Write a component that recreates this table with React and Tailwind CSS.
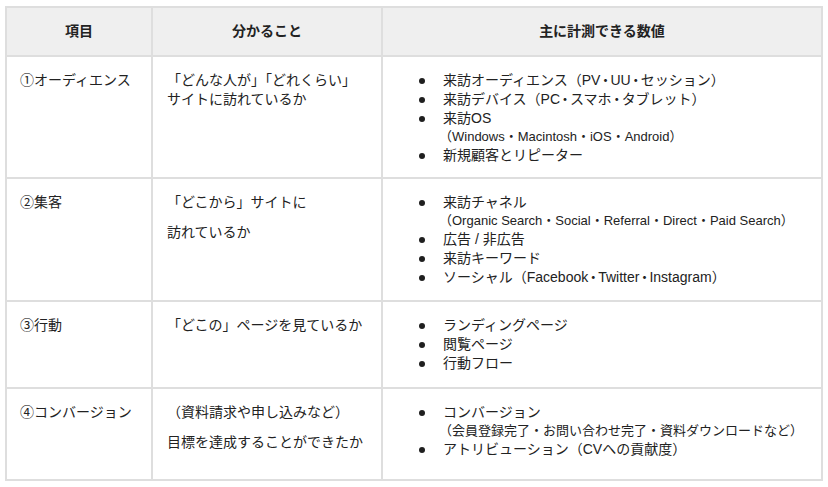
import React from "react";

const font = "font-['Liberation_Sans','Noto_Sans_CJK_JP',sans-serif]";

function D() {
  return <span className="[font-feature-settings:'halt'] px-[1.5px]">・</span>;
}

function Bullet({ children, sub }) {
  return (
    <li className="flex items-start">
      <span className="w-[60px] shrink-0 pl-[36px] pt-[7px]">
        <span className="block w-[6px] h-[6px] rounded-full bg-[#1f1f1f]"></span>
      </span>
      <div className="whitespace-nowrap">
        <div>{children}</div>
        {sub && <div className="-ml-[4px] text-[13px] leading-[18px]">{sub}</div>}
      </div>
    </li>
  );
}

function Cell({ children, className = "" }) {
  return (
    <td className={`border-2 border-[#dedede] align-top pt-[14px] ${className}`}>
      {children}
    </td>
  );
}

export default function App() {
  return (
    <div className={`w-[828px] h-[487px] bg-white pl-[5px] pt-[6px] text-[14px] leading-[19px] text-[#222] ${font}`}>
      <table className="table-fixed border-collapse w-[816px]">
        <colgroup>
          <col className="w-[146px]" />
          <col className="w-[230px]" />
          <col className="w-[440px]" />
        </colgroup>
        <thead>
          <tr className="h-[49px] bg-[#efefef]">
            <th className="border-2 border-[#dedede] font-bold text-center align-middle">項目</th>
            <th className="border-2 border-[#dedede] font-bold text-center align-middle">分かること</th>
            <th className="border-2 border-[#dedede] font-bold text-center align-middle">主に計測できる数値</th>
          </tr>
        </thead>
        <tbody>
          <tr className="h-[122px]">
            <Cell className="pl-[13px]">①オーディエンス</Cell>
            <Cell className="pl-[14px]">
              <div>「どんな人が」「どれくらい」</div>
              <div>サイトに訪れているか</div>
            </Cell>
            <Cell>
              <ul>
                <Bullet>来訪オーディエンス（PV<D />UU<D />セッション）</Bullet>
                <Bullet>来訪デバイス（PC<D />スマホ<D />タブレット）</Bullet>
                <Bullet sub="（Windows・Macintosh・iOS・Android）">来訪OS</Bullet>
                <Bullet>新規顧客とリピーター</Bullet>
              </ul>
            </Cell>
          </tr>
          <tr className="h-[123px]">
            <Cell className="pl-[13px]">②集客</Cell>
            <Cell className="pl-[14px]">
              <p className="mb-[11px]">「どこから」サイトに</p>
              <p>訪れているか</p>
            </Cell>
            <Cell>
              <ul>
                <Bullet sub="（Organic Search・Social・Referral・Direct・Paid Search）">来訪チャネル</Bullet>
                <Bullet>広告 / 非広告</Bullet>
                <Bullet>来訪キーワード</Bullet>
                <Bullet>ソーシャル（Facebook<D />Twitter<D />Instagram）</Bullet>
              </ul>
            </Cell>
          </tr>
          <tr className="h-[87px]">
            <Cell className="pl-[13px]">③行動</Cell>
            <Cell className="pl-[14px]">「どこの」ページを見ているか</Cell>
            <Cell>
              <ul>
                <Bullet>ランディングページ</Bullet>
                <Bullet>閲覧ページ</Bullet>
                <Bullet>行動フロー</Bullet>
              </ul>
            </Cell>
          </tr>
          <tr className="h-[92px]">
            <Cell className="pl-[13px]">④コンバージョン</Cell>
            <Cell className="pl-[14px]">
              <p className="mb-[11px]">（資料請求や申し込みなど）</p>
              <p>目標を達成することができたか</p>
            </Cell>
            <Cell>
              <ul>
                <Bullet sub="（会員登録完了・お問い合わせ完了・資料ダウンロードなど）">コンバージョン</Bullet>
                <Bullet>アトリビューション（CVへの貢献度）</Bullet>
              </ul>
            </Cell>
          </tr>
        </tbody>
      </table>
    </div>
  );
}
